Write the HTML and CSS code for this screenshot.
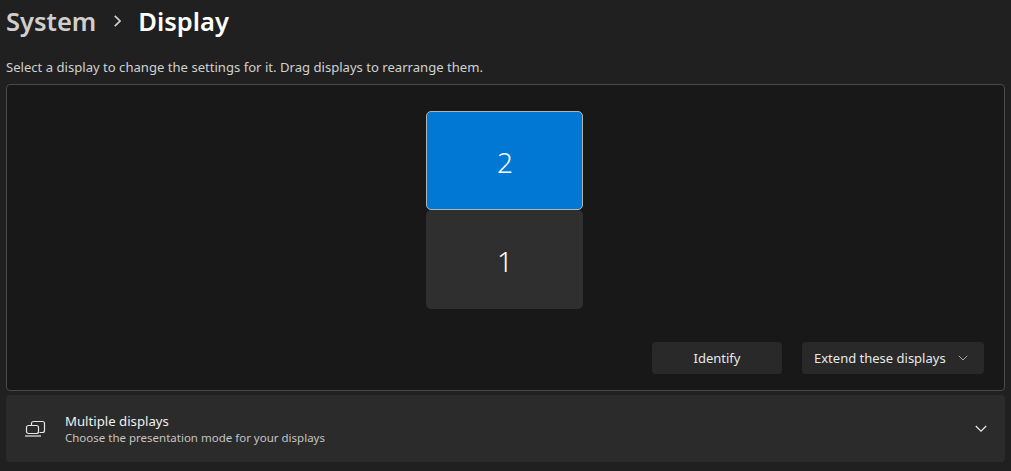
FILE: index.html
```html
<!DOCTYPE html>
<html lang="en">
<head>
<meta charset="utf-8">
<title>Display</title>
<link rel="stylesheet" href="styles.css">
</head>
<body>
<header class="crumbs">
  <span class="crumb-parent">System</span>
  <svg class="crumb-sep" width="10" height="14" viewBox="0 0 10 14"><path d="M3.800 1.800 9 7l-5.200 5.200" fill="none" stroke="#d0d0d0" stroke-width="1.700"/></svg>
  <span class="crumb-current">Display</span>
</header>
<p class="hint">Select a display to change the settings for it. Drag displays to rearrange them.</p>
<section class="panel">
  <div class="monitors">
    <div class="monitor monitor-selected">2</div>
    <div class="monitor">1</div>
  </div>
  <div class="actions">
    <button class="btn btn-identify">Identify</button>
    <button class="btn btn-mode">Extend these displays
      <svg width="10" height="6" viewBox="0 0 10 6"><path d="M.8.8 5 5 9.200.8" fill="none" stroke="#a8a8a8" stroke-width="1"/></svg>
    </button>
  </div>
</section>
<section class="card">
  <svg class="card-icon" width="22" height="18" viewBox="0 0 22 18" fill="none" stroke="#e4e4e4" stroke-width="1.200">
    <path d="M7.500 5V3.500a2 2 0 0 1 2-2h9a2 2 0 0 1 2 2v7a2 2 0 0 1-2 2h-3"/>
    <rect x="2.500" y="5.500" width="12" height="8" rx="2"/>
    <path d="M1 16h16"/>
  </svg>
  <div class="card-text">
    <div class="card-title">Multiple displays</div>
    <div class="card-sub">Choose the presentation mode for your displays</div>
  </div>
  <svg class="card-chevron" width="12" height="8" viewBox="0 0 12 8"><path d="M.8 1 6 6.200 11.200 1" fill="none" stroke="#e8e8e8" stroke-width="1.300"/></svg>
</section>
</body>
</html>
```
FILE: styles.css
```css
* { box-sizing: border-box; }
html, body { height: 100%; }
body {
  margin: 0;
  padding: 0 6px;
  background: #202020;
  color: #fff;
  font-family: "Noto Sans", "Open Sans", sans-serif;
  overflow: hidden;
}
.crumbs {
  display: flex;
  align-items: center;
  height: 42px;
  font-size: 25.500px;
  font-weight: 600;
  line-height: 42px;
}
.crumb-parent { color: #cfcfcf; }
.crumb-sep { margin: 0 17px 0 15px; }
.crumb-current { color: #fff; }
.hint {
  margin: 0;
  padding-top: 17px;
  height: 42px;
  font-size: 13.100px;
  line-height: 17px;
  color: #d0d0d0;
}
.panel {
  height: 307px;
  background: #181818;
  border: 1px solid #4a4a4a;
  border-radius: 4px;
  padding: 26px 20px 16px;
  display: flex;
  flex-direction: column;
}
.monitors {
  display: flex;
  flex-direction: column;
  align-items: center;
  flex: 1;
  margin-right: 2px;
}
.monitor {
  width: 157px;
  height: 99px;
  background: #2f2f2f;
  border-radius: 5px;
  display: flex;
  align-items: center;
  justify-content: center;
  padding: 2px 0 0 1px;
  font-size: 28px;
  font-weight: 300;
  color: #fff;
}
.monitor-selected {
  background: #0078d4;
  border: 1px solid #b4b4b4;
}
.actions {
  display: flex;
  justify-content: flex-end;
  gap: 20px;
}
.btn {
  height: 32px;
  border: 0;
  border-radius: 4px;
  background: #292929;
  color: #e8e8e8;
  font: inherit;
  font-size: 13px;
  padding: 0;
}
.btn-identify { width: 130px; }
.btn-mode {
  width: 182px;
  display: flex;
  align-items: center;
  gap: 12px;
  padding-left: 12px;
}
.card {
  margin-top: 4px;
  height: 67px;
  background: #2b2b2b;
  border-radius: 4px;
  display: flex;
  align-items: center;
  padding: 0 18px;
}
.card-icon { flex: none; margin-right: 19px; }
.card-text { flex: 1; }
.card-title { font-size: 13.200px; line-height: 18px; color: #f0f0f0; }
.card-sub { font-size: 11.500px; line-height: 16px; color: #c4c4c4; }
```
